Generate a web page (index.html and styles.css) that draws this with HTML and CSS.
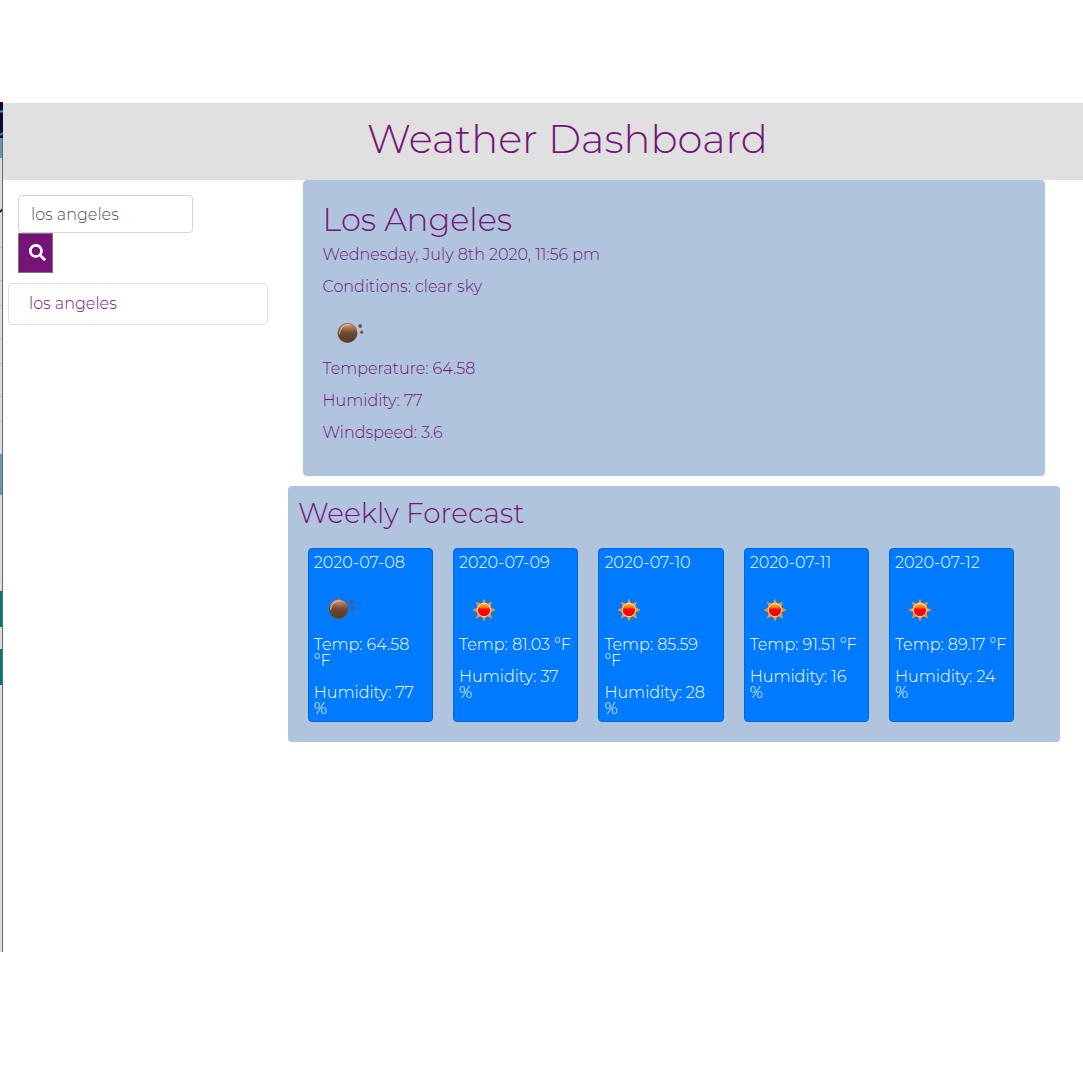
FILE: index.html
```html
<!DOCTYPE html>
<html lang="en">
<head>
<meta charset="utf-8">
<title>Weather Dashboard</title>
<link rel="stylesheet" href="styles.css">
</head>
<body>
<svg class="defs" width="0" height="0" aria-hidden="true">
  <defs>
    <linearGradient id="moonFill" x1="0" y1="0" x2="0" y2="1">
      <stop offset="0" stop-color="#d7a27c"/><stop offset=".25" stop-color="#a5714c"/><stop offset=".5" stop-color="#70472d"/><stop offset="1" stop-color="#573a29"/>
    </linearGradient>
    <linearGradient id="sunFill" x1="0" y1="0" x2="0" y2="1">
      <stop offset="0" stop-color="#ffc12e"/><stop offset=".3" stop-color="#ff7a0c"/><stop offset=".45" stop-color="#ff0a00"/><stop offset="1" stop-color="#f80000"/>
    </linearGradient>
    <symbol id="moon" viewBox="0 0 50 50">
      <circle cx="24.500" cy="23" r="10" fill="#7d5c47"/>
      <circle cx="24.500" cy="23" r="9.400" fill="url(#moonFill)"/>
      <path d="M16.600 23.500a8.400 8.400 0 0 1 9.500-8.600" fill="none" stroke="#e3c3ab" stroke-width="1" stroke-linecap="round"/>
      <circle cx="37.200" cy="16" r="1.900" fill="#785343"/>
      <circle cx="38.700" cy="22.200" r="1.600" fill="#785343"/>
    </symbol>
    <symbol id="sun" viewBox="0 0 50 50">
      <path d="M25 12.500l2.200 5.500 5.800-2.300-1.800 5.600 5.600 2.700-5.600 2.600 2.100 5.800-6-2.300-2.300 5.700-2.300-5.700-6 2.300 2.100-5.800-5.600-2.600 5.600-2.700-2-5.600 6 2.300z" fill="#f6971d"/>
      <circle cx="25" cy="24" r="6.700" fill="url(#sunFill)" stroke="#ffe9c0" stroke-width="1"/>
    </symbol>
  </defs>
</svg>
<div class="screen">
  <div class="edge" aria-hidden="true">
    <svg width="3" height="850" viewBox="0 0 3 850">
      <path d="M0 0h2v850H0z" fill="#dcdcdc"/>
      <path d="M0 0h3v36H0z" fill="#16062f"/>
      <path d="M0 9.500h3M0 33l3-2" stroke="#13b5c0" stroke-width="1.800"/>
      <path d="M0 36h2v20H0z" fill="#6795b8"/>
      <path d="M0 110l3-3" stroke="#17122b" stroke-width="2"/>
      <path d="M0 145.500h2M0 178.500h2M0 203.500h2M0 236.500h2M0 261.500h2M0 294.500h2M0 319.500h2" stroke="#bcbcbc"/>
      <path d="M0 352h2v41H0z" fill="#6795b8"/>
      <path d="M0 489h2v36H0zM0 547h2v36H0z" fill="#007a78"/>
      <path d="M2 36h1v814H2z" fill="#696969"/>
    </svg>
  </div>
  <div class="app">
    <header class="banner"><h1 class="title">Weather Dashboard</h1></header>
    <div class="columns">
      <aside class="sidebar">
        <form class="search">
          <div class="field">los angeles</div>
          <button class="go" type="button" aria-label="Search">
            <svg width="17" height="17" viewBox="0 0 512 512"><path fill="#fff" d="M505 442.700L405.300 343c-4.500-4.500-10.600-7-17-7H372c27.600-35.300 44-79.700 44-128C416 93.100 322.900 0 208 0S0 93.100 0 208s93.100 208 208 208c48.300 0 92.700-16.400 128-44v16.300c0 6.400 2.500 12.500 7 17l99.700 99.700c9.400 9.400 24.600 9.400 33.900 0l28.300-28.300c9.400-9.400 9.400-24.600.1-34zM208 336c-70.700 0-128-57.200-128-128 0-70.700 57.200-128 128-128 70.700 0 128 57.200 128 128 0 70.700-57.200 128-128 128z"/></svg>
          </button>
        </form>
        <div class="history">los angeles</div>
      </aside>
      <main class="content">
        <section class="current">
          <h2 class="city">Los Angeles</h2>
          <p class="line">Wednesday, July 8th 2020, 11:56 pm</p>
          <p class="line">Conditions: clear sky</p>
          <svg class="icon"><use href="#moon"/></svg>
          <p class="line">Temperature: 64.58</p>
          <p class="line">Humidity: 77</p>
          <p class="line">Windspeed: 3.6</p>
        </section>
        <section class="weekly">
          <h3 class="weekly-title">Weekly Forecast</h3>
          <div class="days">
            <article class="day"><p class="line">2020-07-08</p><svg class="icon"><use href="#moon"/></svg><p class="line">Temp: 64.58<br>°F</p><p class="line">Humidity: 77<br>%</p></article>
            <article class="day"><p class="line">2020-07-09</p><svg class="icon"><use href="#sun"/></svg><p class="line">Temp: 81.03 °F</p><p class="line">Humidity: 37<br>%</p></article>
            <article class="day"><p class="line">2020-07-10</p><svg class="icon"><use href="#sun"/></svg><p class="line">Temp: 85.59<br>°F</p><p class="line">Humidity: 28<br>%</p></article>
            <article class="day"><p class="line">2020-07-11</p><svg class="icon"><use href="#sun"/></svg><p class="line">Temp: 91.51 °F</p><p class="line">Humidity: 16<br>%</p></article>
            <article class="day"><p class="line">2020-07-12</p><svg class="icon"><use href="#sun"/></svg><p class="line">Temp: 89.17 °F</p><p class="line">Humidity: 24<br>%</p></article>
          </div>
        </section>
      </main>
    </div>
  </div>
</div>
</body>
</html>
```
FILE: styles.css
```css
* { box-sizing: border-box; }
body { margin: 0; background: #fff; color: #751378; font: 300 16px/16px Montserrat, Inter, sans-serif; }
h1, h2, h3, p { margin: 0; font-weight: 300; white-space: nowrap; }
.defs { display: block; }
.screen { display: flex; margin-top: 102px; height: 850px; }
.edge { width: 3px; flex: none; }
.edge svg { display: block; }
.app { flex: 1; padding-top: 1px; }
.banner { height: 77px; background: #e0e0e0; padding: 12px 0 0 364px; }
.title { font-size: 40px; line-height: 48px; }
.columns { display: flex; }
.sidebar { width: 285px; flex: none; padding: 15px 20px 0 5px; }
.search { padding-left: 10px; }
.field { width: 175px; height: 38px; border: 1px solid #ced4da; border-radius: 4px; padding: 11px 12px 9px; color: #495057; }
.go { display: flex; align-items: center; justify-content: center; width: 35px; height: 40px; padding: 0 0 2px 4px; border: 1px solid #777; background: #751378; }
.history { width: 260px; height: 42px; margin-top: 10px; border: 1px solid #dfdfdf; border-radius: 4px; padding: 12px 20px 10px; }
.content { width: 772px; }
.current { width: 742px; height: 296px; margin-left: 15px; padding: 21px 19.5px 19px; background: #b0c4de; border-radius: 4px; }
.city { font-size: 32px; line-height: 38px; margin-bottom: 8px; }
.line { margin-bottom: 16px; }
.icon { display: block; width: 50px; height: 50px; margin: -1px 0 1px; }
.weekly { height: 256px; margin-top: 10px; padding: 10px; background: #b0c4de; border-radius: 4px; }
.weekly-title { font-size: 28px; line-height: 34px; margin-bottom: 18px; }
.days { display: flex; gap: 20px; padding-left: 9.8px; }
.day { width: 125.3px; height: 174px; padding: 6px 5px 4px; border: 1px solid #0069d9; border-radius: 4px; background: #007bff; color: #fff; }
```
